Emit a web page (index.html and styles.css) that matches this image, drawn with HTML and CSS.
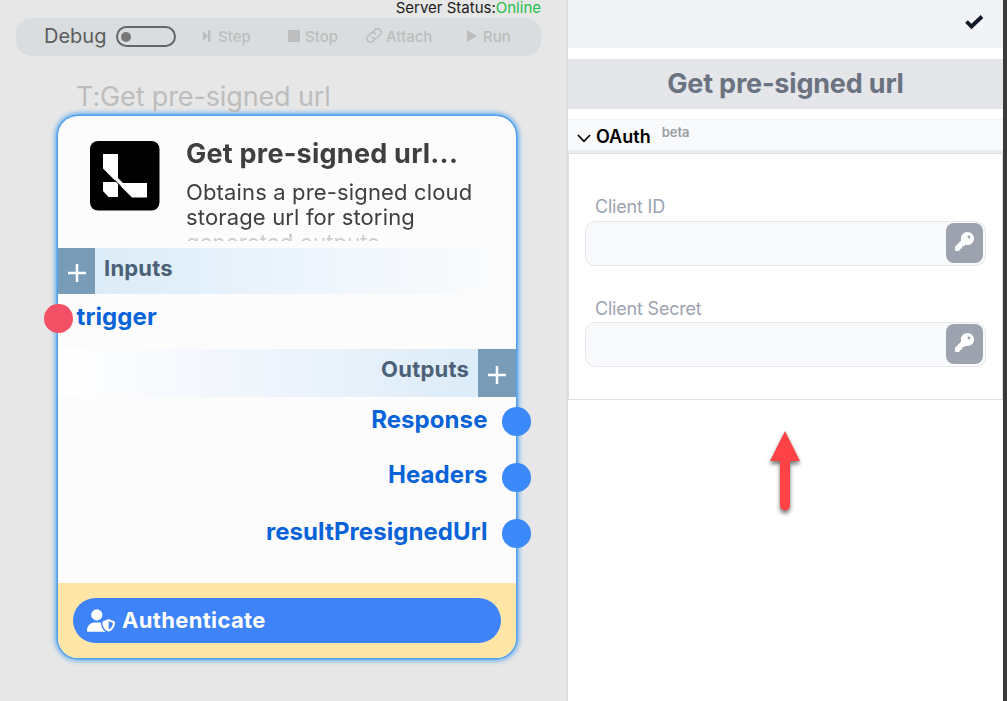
FILE: index.html
```html
<!DOCTYPE html>
<html lang="en">
<head>
<meta charset="utf-8">
<title>Get pre-signed url</title>
<link rel="stylesheet" href="styles.css">
</head>
<body>
<div class="app">
  <main class="canvas">
    <div class="status"><span class="status-label">Server Status:</span><span class="online">Online</span></div>
    <div class="toolbar">
      <span class="debug">Debug</span>
      <span class="toggle"><span class="knob"></span></span>
      <span class="tool step"><svg width="8" height="12" viewBox="0 0 8 12"><path d="M0 1v10l5-5zM5 0h2.200v12H5z"/></svg>Step</span>
      <span class="tool stop"><svg width="12" height="12" viewBox="0 0 12 12"><path d="M0 0h12v12H0z"/></svg>Stop</span>
      <span class="tool attach"><svg class="link" width="16" height="17" viewBox="0 0 24 24"><path d="M9.500 14.500a5 5 0 0 0 7.500.5l4-4a5 5 0 0 0-7.500-7.500l-3 3M14.500 9.500a5 5 0 0 0-7.500-.5l-4 4a5 5 0 0 0 7.500 7.500l3-3"/></svg>Attach</span>
      <span class="tool run"><svg width="10" height="12" viewBox="0 0 10 12"><path d="M0 0v12l10-6z"/></svg>Run</span>
    </div>
    <div class="node-wrap">
      <div class="node-tag">T:Get pre-signed url</div>
      <section class="node">
        <header class="node-head">
          <svg class="logo" width="70" height="70" viewBox="0 0 70 70"><rect width="69.500" height="69.500" rx="8"/><path fill="#fff" d="M13 13h15v24l5 5h24v14.500H42L28 42.500V56h-9.500L13 50V41h13.500L13 27.500z"/><path stroke="#000" stroke-width="1" d="M24.500 39l6 6"/></svg>
          <div class="node-info">
            <h2>Get pre-signed url...</h2>
            <p>Obtains a pre-signed cloud storage url for storing generated outputs</p>
          </div>
        </header>
        <div class="band inputs"><button class="plus"><svg width="18" height="18"><path d="M9 0v18M0 9h18"/></svg></button><span>Inputs</span></div>
        <div class="port in"><i class="dot red"></i><span class="trigger">trigger</span></div>
        <div class="band outputs"><span>Outputs</span><button class="plus"><svg width="18" height="18"><path d="M9 0v18M0 9h18"/></svg></button></div>
        <div class="ports">
          <div class="port out"><span class="response">Response</span><i class="dot"></i></div>
          <div class="port out"><span class="headers">Headers</span><i class="dot"></i></div>
          <div class="port out"><span class="result">resultPresignedUrl</span><i class="dot"></i></div>
        </div>
        <footer class="node-foot">
          <button class="auth"><svg width="28" height="23" viewBox="0 0 640 512"><path d="M224 256A128 128 0 1 0 224 0a128 128 0 1 0 0 256zm-45.700 48C79.800 304 0 383.800 0 482.300C0 498.700 13.300 512 29.700 512H418.300c1.800 0 3.500-.2 5.300-.5c-76.300-55.100-99.800-141-103.100-200.200c-16.100-4.800-33.100-7.300-50.700-7.300H178.300zm308.800-78.300l-120 48C358 277.400 352 286.200 352 296c0 63.300 25.900 168.800 134.800 214.200c5.900 2.500 12.600 2.500 18.500 0C614.100 464.800 640 359.300 640 296c0-9.800-6-18.600-15.100-22.300l-120-48c-5.700-2.300-12.100-2.300-17.800 0zM591.400 312c-3.900 50.700-27.200 116.700-95.400 149.700V273.800L591.400 312z"/></svg><span>Authenticate</span></button>
        </footer>
      </section>
    </div>
  </main>
  <aside class="panel">
    <div class="panel-top"><svg width="20" height="16" viewBox="0 0 20 16"><path d="M2.500 7.500l5 5L18 2.500"/></svg></div>
    <h1 class="panel-title"><span>Get pre-signed url</span></h1>
    <div class="section-head"><svg width="14" height="9" viewBox="0 0 14 9"><path d="M1 1l6 6.300L13 1"/></svg><span class="oauth">OAuth</span><span class="beta">beta</span></div>
    <div class="form">
      <label class="id-label"><span>Client ID</span></label>
      <div class="field"><button class="key"><svg width="19" height="19" viewBox="0 0 512 512"><path d="M336 352c97.200 0 176-78.800 176-176S433.200 0 336 0S160 78.800 160 176c0 18.700 2.900 36.800 8.300 53.700L7 391c-4.500 4.500-7 10.600-7 17v80c0 13.300 10.700 24 24 24h80c13.300 0 24-10.700 24-24V448h40c13.300 0 24-10.700 24-24V384h40c6.400 0 12.500-2.500 17-7l33.300-33.300c16.900 5.400 35 8.300 53.700 8.300zM376 96a40 40 0 1 1 0 80 40 40 0 1 1 0-80z"/></svg></button></div>
      <label class="secret-label"><span>Client Secret</span></label>
      <div class="field"><button class="key"><svg width="19" height="19" viewBox="0 0 512 512"><path d="M336 352c97.200 0 176-78.800 176-176S433.200 0 336 0S160 78.800 160 176c0 18.700 2.900 36.800 8.300 53.700L7 391c-4.500 4.500-7 10.600-7 17v80c0 13.300 10.700 24 24 24h80c13.300 0 24-10.700 24-24V448h40c13.300 0 24-10.700 24-24V384h40c6.400 0 12.500-2.500 17-7l33.300-33.300c16.900 5.400 35 8.300 53.700 8.300zM376 96a40 40 0 1 1 0 80 40 40 0 1 1 0-80z"/></svg></button></div>
    </div>
    <svg class="arrow" width="60" height="100" viewBox="0 0 60 100"><path d="M30 11l15 30H35v44.500a5 5 0 0 1-10 0V41H15z"/></svg>
  </aside>
</div>
</body>
</html>
```
FILE: styles.css
```css
* { box-sizing: border-box; }
body { margin: 0; font-family: Inter, "Liberation Sans", sans-serif; }
h1, h2, p { margin: 0; }
button { border: 0; padding: 0; font: inherit; }
svg { flex: none; display: block; }
span { white-space: nowrap; }
.app { display: flex; width: 1007px; height: 701px; overflow: hidden; border-right: 4px solid #3a3a3a; background: #fff; }
.canvas { position: relative; width: 568px; flex: none; background: #e7e7e7; border-right: 2px solid #dadde1; }
.status { display: flex; justify-content: flex-end; height: 18px; padding-right: 25px; font-size: 15px; line-height: 16px; color: #1b1b1b; }
.online { color: #1fc04a; }
.toolbar { display: flex; align-items: center; width: 525px; height: 38px; margin-left: 16px; padding-left: 28px; border-radius: 15px; background: #d9dddf; }
.debug { width: 72px; font-size: 20px; line-height: 36px; color: #5c5c5c; height: 38px; }
.toggle { display: flex; align-items: center; width: 60px; height: 21px; margin-top: -1px; padding-left: 3px; border: 2px solid #666; border-radius: 11px; }
.knob { width: 10px; height: 10px; border-radius: 50%; background: #777; }
.tool { display: flex; align-items: center; gap: 7px; margin-top: -2px; font-size: 15px; font-weight: 500; color: #bdbdbd; }
.tool svg { fill: #bdbdbd; margin-top: -1px; }
.tool svg.link { fill: none; stroke: #bdbdbd; stroke-width: 2.400; stroke-linecap: round; }
.step { width: 85px; margin-left: 27px; }
.stop { width: 78px; gap: 5px; }
.attach { width: 101px; gap: 4px; }
.run { gap: 6px; }
.node-wrap { position: absolute; left: 58px; top: 80px; width: 458px; }
.node-tag { height: 36px; padding-left: 18px; font-size: 27px; line-height: 33px; letter-spacing: -.13px; color: #bdbdbd; }
.node { height: 542px; border-radius: 20px; background: #fcfcfc; box-shadow: 0 0 0 1.500px #52a2ee, 0 0 5px 3px #63abec; }
.node-head { display: flex; height: 132px; padding: 25px 20px 0 32px; }
.node-info { height: 100px; margin-left: 26px; width: 310px; overflow: hidden; color: #3f3f3f; -webkit-mask-image: linear-gradient(#000 88%, rgba(0,0,0,.25) 95%); mask-image: linear-gradient(#000 88%, rgba(0,0,0,.25) 95%); }
.node-info h2 { font-size: 27px; line-height: 25px; margin-bottom: 14px; letter-spacing: .24px; white-space: nowrap; }
.node-info p { font-size: 22px; line-height: 25px; letter-spacing: .15px; }
.band { display: flex; font-size: 22px; font-weight: 700; letter-spacing: .2px; color: #4b6178; }
.inputs { height: 46px; background: linear-gradient(90deg, #d8eaf7, #eff6fd 60%, #fcfcfc); }
.inputs span { margin-left: 9px; line-height: 41px; }
.outputs { justify-content: flex-end; height: 48px; background: linear-gradient(90deg, #fff, #eff5fc 45%, #d8eaf7); }
.outputs span { margin-right: 9px; line-height: 41px; }
.plus { display: flex; align-items: center; justify-content: center; width: 37px; height: 100%; padding-top: 4px; background: #789cb7; }
.outputs .plus { width: 38px; }
.plus path { stroke: #fff; stroke-width: 2.500; }
.port { display: flex; font-size: 24px; font-weight: 700; letter-spacing: .07px; color: #0863d8; }
.in { height: 55px; padding-top: 10px; margin-left: -14px; }
.in span { margin-left: 4px; line-height: 26px; letter-spacing: .1px; }
.dot { width: 28.500px; height: 28.500px; border-radius: 50%; background: #3b89fa; }
.dot.red { background: #f55166; }
.ports { height: 186px; padding-top: 10px; }
.out { justify-content: flex-end; height: 56px; margin-right: -14.500px; }
.out span { margin-right: 14.500px; line-height: 26px; }
.out .headers { line-height: 24px; }
.node-foot { height: 75px; padding: 15px; background: #ffe6a6; border-radius: 0 0 20px 20px; }
.auth { display: flex; align-items: center; gap: 8px; width: 428px; height: 45px; padding-left: 14px; border-radius: 22.500px; background: #3e83f8; color: #fff; font-size: 22px; font-weight: 700; line-height: 25px; letter-spacing: .33px; }
.auth span { margin-left: -1px; }
.auth path { fill: #fff; }
.panel { position: relative; flex: 1; background: #fff; }
.panel-top { display: flex; justify-content: flex-end; height: 48px; padding: 14px 19px 0 0; margin-bottom: 11px; background: #f2f3f5; }
.panel-top path { fill: none; stroke: #101828; stroke-width: 3.800; }
.panel-title { height: 50px; margin-bottom: 10px; background: #e4e6ea; text-align: center; font-size: 27px; line-height: 50px; letter-spacing: -.2px; color: #6b7280; }
.section-head { display: flex; height: 34px; padding-left: 9px; border-top: 1px solid #f0f1f3; border-bottom: 3px solid #e9ebee; background: #f9fafb; }
.section-head svg { margin: 14px 5px 0 0; }
.section-head path { fill: none; stroke: #000; stroke-width: 1.700; }
.oauth { font-size: 18px; font-weight: 600; line-height: 34px; color: #000; }
.beta { margin-left: 11px; font-size: 13px; font-weight: 600; line-height: 25px; color: #9a9da5; }
.form { height: 247px; padding: 40px 16px 0; border: 1px solid #dcdee2; border-top-color: #dfe1e5; }
.form label { display: block; height: 27px; padding-left: 10px; font-size: 18px; line-height: 26px; letter-spacing: -.2px; color: #9ca3af; }
.form .secret-label { height: 26px; margin-top: 30px; }
.field { display: flex; justify-content: flex-end; width: 401px; height: 45px; padding: 1px 2px; border: 1px solid #e5e7eb; border-radius: 10px; background: #f9fafb; }
.key { display: flex; justify-content: center; width: 37px; height: 40px; padding-top: 9px; border-radius: 8px; background: #9ca3af; }
.key path { fill: #fff; }
.arrow { position: absolute; left: 187px; top: 420px; filter: drop-shadow(0 3px 2px rgba(0,0,0,.55)); }
.arrow path { fill: #ff4245; }
```
